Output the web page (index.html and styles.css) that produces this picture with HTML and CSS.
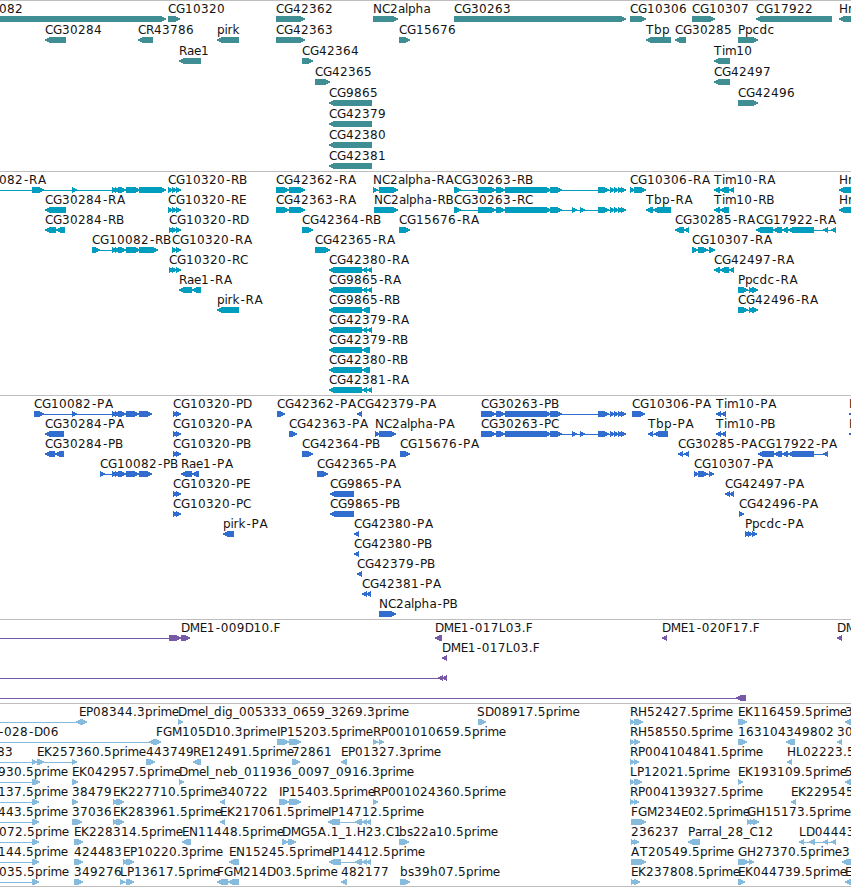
FILE: index.html
```html
<!DOCTYPE html>
<html lang="en">
<head>
<meta charset="utf-8">
<title>Genome tracks</title>
<link rel="stylesheet" href="styles.css">
</head>
<body>
<main class="browser">
  <section class="track track-gene"><svg class="lane" data-track="gene"></svg></section>
  <section class="track track-mrna"><svg class="lane" data-track="mrna"></svg></section>
  <section class="track track-cds"><svg class="lane" data-track="cds"></svg></section>
  <section class="track track-bac"><svg class="lane" data-track="bac"></svg></section>
  <section class="track track-est"><svg class="lane" data-track="est"></svg></section>
</main>
<script src="tracks.js"></script>
</body>
</html>
```
FILE: styles.css
```css
body {
  margin: 0;
  background: #fff;
}

.browser {
  display: flex;
  flex-direction: column;
  width: 851px;
  height: 887px;
  overflow: hidden;
  box-sizing: border-box;
  border-bottom: 1px solid #bebebe;
}

.track {
  box-sizing: border-box;
  border-top: 1px solid #bebebe;
  flex: none;
}

.track-gene { height: 171px; color: #3e8e94; }
.track-mrna { height: 224px; color: #009dbf; }
.track-cds  { height: 224px; color: #316dce; }
.track-bac  { height: 84px;  color: #7759a8; }
.track-est  { height: 183px; color: #87bbdd; }

.lane {
  display: block;
  width: 100%;
  height: 100%;
  overflow: hidden;
}

.label {
  font: 12px "DejaVu Sans", sans-serif;
  fill: #141414;
}

.glyph {
  fill: currentColor;
  shape-rendering: crispEdges;
}
```
FILE: tracks.js
```js
// One string per row; features are separated by ";".
// A feature is: label | label x | strand (< or >) | exon ranges.
// Exons of a feature are joined by a one pixel intron line.
const small = "112-117,115-120,118-126";
const rb = "168-173,172-177,176-181";
const rd = "169-173,172-177,176-181";
const long3 = "329-362,362-367,367-372";
const long2 = "329-362,362-370";
const tail = "598-609,610-615,614-619,618-623,621-626";
const tim = "714-720,720-729,729-734";

const tracks = {
  gene: { step: 21, rows: [
    "082|-1|>|-9-166;CG10320|168|>|168-180;CG42362|276|>|276-305;NC2alpha|373|>|373-398;CG30263|454|>|454-626;CG10306|630|>|630-646;CG10307|692|>|692-715;CG17922|756|<|756-832;Hr|839|<|839-870",
    "CG30284|45|<|45-66;CR43786|138|<|138-153;pirk|217|<|217-239;CG42363|276|>|276-305;CG15676|399|>|399-410;Tbp|646|<|646-671;CG30285|675|<|675-686;Ppcdc|738|>|738-758",
    "Rae1|179|<|179-201;CG42364|302|>|302-313;Tim10|714|<|714-730",
    "CG42365|315|>|315-330;CG42497|714|<|714-730",
    "CG9865|329|<|329-372;CG42496|738|>|738-758",
    "CG42379|329|<|329-372",
    "CG42380|329|<|329-372",
    "CG42381|329|<|329-372"
  ]},
  mrna: { step: 20, rows: [
    `082-RA|-1|>|-9--8,32-44,72-77,${small},126-140,139-166;CG10320-RB|168|>|${rb};CG42362-RA|276|>|276-289,289-305;NC2alpha-RA|373|>|373-378,379-398;CG30263-RB|454|>|454-461,478-496,496-505,505-551,550-562,${tail};CG10306-RA|630|>|630-635,634-646;Tim10-RA|714|<|${tim};Hr|839|<|839-870`,
    `CG30284-RA|45|<|45-66;CG10320-RE|168|>|${rb};CG42363-RA|276|>|276-289,289-305;NC2alpha-RB|374|>|374-398;CG30263-RC|454|>|454-461,478-496,496-505,505-551,550-562,572-577,580-585,${tail};Tbp-RA|646|<|646-653,653-671;Tim10-RB|714|<|714-720,720-729;Hr|839|<|839-870`,
    `CG30284-RB|45|<|45-56,56-65;CG10320-RD|169|>|${rd};CG42364-RB|302|>|302-313;CG15676-RA|399|>|399-410;CG30285-RA|675|<|675-684,684-689;CG17922-RA|756|<|756-773,773-782,782-788,788-814,823-828,831-836`,
    `CG10082-RB|92|>|92-100,${small},126-140,139-158;CG10320-RA|172|>|172-177,176-181;CG42365-RA|315|>|315-330;CG10307-RA|692|>|692-698,698-708,709-715`,
    `CG10320-RC|169|>|${rd};CG42380-RA|329|<|${long3};CG42497-RA|714|<|${tim}`,
    `Rae1-RA|179|<|179-192,192-201;CG9865-RA|329|<|${long3};Ppcdc-RA|738|>|738-748,749-754,752-758`,
    `pirk-RA|217|<|217-239;CG9865-RB|329|<|${long2};CG42496-RA|738|>|738-748,749-754,752-758`,
    `CG42379-RA|329|<|${long3}`,
    `CG42379-RB|329|<|${long2}`,
    `CG42380-RB|329|<|${long2}`,
    `CG42381-RA|329|<|${long3}`
  ]},
  cds: { step: 20, rows: [
    `CG10082-PA|34|>|34-44,72-77,${small},126-139,139-152;CG10320-PD|173|>|173-177,176-181;CG42362-PA|277|>|277-285;CG42379-PA|357|<|357-362;CG30263-PB|481|>|481-496,496-505,505-551,550-562,${tail};CG10306-PA|632|>|632-645;Tim10-PA|716|<|716-721,721-726;H|849|<|849-870`,
    `CG30284-PA|45|<|45-64;CG10320-PA|173|>|173-177,176-181;CG42363-PA|289|>|289-297;NC2alpha-PA|375|>|375-379,379-396;CG30263-PC|481|>|481-496,496-505,505-551,550-562,572-577,580-585,${tail};Tbp-PA|648|<|648-653,654-668;Tim10-PB|716|<|716-721,721-726;H|849|<|849-870`,
    "CG30284-PB|45|<|45-55,55-64;CG10320-PB|173|>|173-177,176-181;CG42364-PB|302|>|302-313;CG15676-PA|400|>|400-410;CG30285-PA|678|<|678-683,684-689;CG17922-PA|758|<|758-774,774-782,782-788,788-814,823-828",
    `CG10082-PB|100|>|100-105,${small},126-139,139-152;Rae1-PA|181|<|181-192,192-199;CG42365-PA|317|>|317-328;CG10307-PA|694|>|694-699,698-708,709-714`,
    "CG10320-PE|173|>|173-177,176-181;CG9865-PA|330|<|330-354;CG42497-PA|725|<|725-730,729-734",
    "CG10320-PC|173|>|173-177,176-181;CG9865-PB|330|<|330-354;CG42496-PA|739|>|739-744",
    "pirk-PA|223|<|223-234;CG42380-PA|354|<|354-359;Ppcdc-PA|745|>|745-749,748-753,752-757",
    "CG42380-PB|354|<|354-359",
    "CG42379-PB|357|<|357-362",
    "CG42381-PA|362|<|362-367,366-371",
    "NC2alpha-PB|379|>|379-396"
  ]},
  bac: { step: 20, rows: [
    "|0|>|-9--8,169-181,181-190;DME1-009D10.F|181|>|;DME1-017L03.F|435|<|435-442;DME1-020F17.F|662|<|662-667;DM|837|<|837-842",
    "DME1-017L03.F|442|<|442-447",
    "|0|<|-9--8,438-443,442-447",
    "|0|<|-9--8,736-746"
  ]},
  est: { step: 20, rows: [
    "|0|>|-9--8,80-87;|0|<|76-82;EP08344.3prime|79|>|;Dmel_dig_005333_0659_3269.3prime|178|>|178-183;SD08917.5prime|477|>|478-486;RH52427.5prime|630|>|630-635,634-643;EK116459.5prime|738|>|738-747;3|845|<|845-870",
    "-028-D06|-2|>|-9--8,153-161;|0|<|149-155;FGM105D10.3prime|156|>|;IP15203.5prime|277|>|277-289,289-301;RP001010659.5prime|373|>|373-378,379-384;RH58550.5prime|630|>|630-635,634-640;163104|738|>|738-747;349802|786|<|786-795;30|837|<|837-842",
    "83|-3|>|-9--8,32-37;EK257360.5prime|37|>|37-44,72-77;443749|146|>|146-155;RE12491.5prime|193|<|193-201;72861|292|>|292-300;EP01327.3prime|341|<|341-347;RP004104841.5prime|630|>|630-635,634-639;HL02223.5|787|<|787-792",
    "930.5prime|-2|>|-9--8,32-40;EK042957.5prime|72|>|72-78;Dmel_neb_011936_0097_0916.3prime|179|>|179-184;LP12021.5prime|630|>|630-635,634-642;EK193109.5prime|738|>|738-743;5|845|<|845-870",
    "137.5prime|-2|>|-9--8,32-39;38479|72|>|72-78;EK227710.5prime|113|>|113-118,116-124;340722|220|<|220-225;IP15403.5prime|279|>|279-289,289-301;RP001024360.5prime|373|>|373-378;RP004139327.5prime|630|>|630-635,634-639;EK229545|791|<|791-796",
    "443.5prime|-2|>|-9--8,32-39;37036|72|>|72-82;EK283961.5prime|113|>|113-118,116-124;EK217061.5prime|220|<|220-225;IP14712.5prime|328|<|328-340,355-362,362-367,366-371;FGM234E02.5prime|631|>|631-646;GH15173.5prime|747|>|747-752,750-755,753-759",
    "072.5prime|-1|>|-9--8,32-39;EK228314.5prime|74|>|74-83;EN11448.5prime|182|<|182-191;DMG5A.1_1.H23.C1|282|>|282-288,288-296;bs22a10.5prime|399|>|399-409;236237|631|>|631-635,634-639;Parral_28_C12|688|<|688-700;LD04443|799|<|799-804,809-815,823-828,831-836",
    "144.5prime|-2|>|-9--8,32-39;424483|74|>|74-83;EP10220.3prime|123|>|123-128,126-134;EN15245.5prime|229|<|229-239;IP14412.5prime|329|<|329-341,355-362,362-367,366-371;AT20549.5prime|631|>|631-646;GH27370.5prime|738|>|738-749,749-754;3|842|<|842-870",
    "035.5prime|-1|>|-9--8,32-39;349276|74|>|74-83;LP13617.5prime|120|>|120-125,126-134;FGM214D03.5prime|217|<|217-228,228-239;482177|341|<|341-347;bs39h07.5prime|400|>|400-410;EK237808.5prime|631|>|631-635,634-640;EK044739.5prime|738|>|738-745;E|845|<|845-870"
  ]}
};

const advance = {
  "-": 6, ".": 4, "_": 6, A: 9, B: 8, C: 8, D: 8.7, E: 7, F: 7, G: 9, H: 9, I: 3, K: 8,
  L: 7, M: 10, N: 9, P: 7, R: 8, S: 8, T: 8, a: 7, b: 8, c: 7, d: 8, e: 7, g: 8,
  h: 8, i: 3, k: 7, l: 3, m: 11.3, n: 8, p: 7.6, r: 4.8, s: 6
};

const NS = "http://www.w3.org/2000/svg";

function add(parent, name, attrs) {
  const node = document.createElementNS(NS, name);
  for (const key in attrs) node.setAttribute(key, attrs[key]);
  parent.appendChild(node);
  return node;
}

// Exon drawn as a bar whose tip points along the strand.
function arrow(a, b, y, strand) {
  const tip = Math.min(5, b - a);
  return strand === ">"
    ? `M${a} ${y}H${b - tip + 0.5}L${b} ${y + 2.5}V${y + 3.5}L${b - tip + 0.5} ${y + 6}H${a}Z`
    : `M${b} ${y}H${a + tip - 0.5}L${a} ${y + 2.5}V${y + 3.5}L${a + tip - 0.5} ${y + 6}H${b}Z`;
}

// Small side shifts: centre a hyphen in its cell, open up a final A.
function shift(label, i) {
  if (label[i] === "-") return 1;
  if (label[i] === "A" && i === label.length - 1) return 1;
  return 0;
}

for (const svg of document.querySelectorAll(".lane")) {
  const { step, rows } = tracks[svg.dataset.track];
  rows.forEach((row, r) => {
    const top = r * step;
    for (const feature of row.split(";")) {
      const [label, x, strand, ranges] = feature.split("|");
      if (ranges) {
        const exons = ranges.split(",").map(s => s.match(/^(-?\d+)-(-?\d+)$/).slice(1).map(Number));
        const from = exons[0][0];
        const to = exons[exons.length - 1][1];
        const d = exons.map(([a, b]) => arrow(a, b, top + 15, strand)).join("");
        add(svg, "path", { class: "glyph", d: d });
        add(svg, "rect", { class: "glyph", x: from, y: top + 18, width: to - from, height: 1 });
      }
      if (label) {
        let pen = Number(x);
        const xs = [...label].map((ch, i) => {
          const at = pen + shift(label, i);
          pen += advance[ch] || 8;
          return at;
        });
        add(svg, "text", { class: "label", x: xs.join(" "), y: top + 12 }).textContent = label;
      }
    }
  });
}
```
